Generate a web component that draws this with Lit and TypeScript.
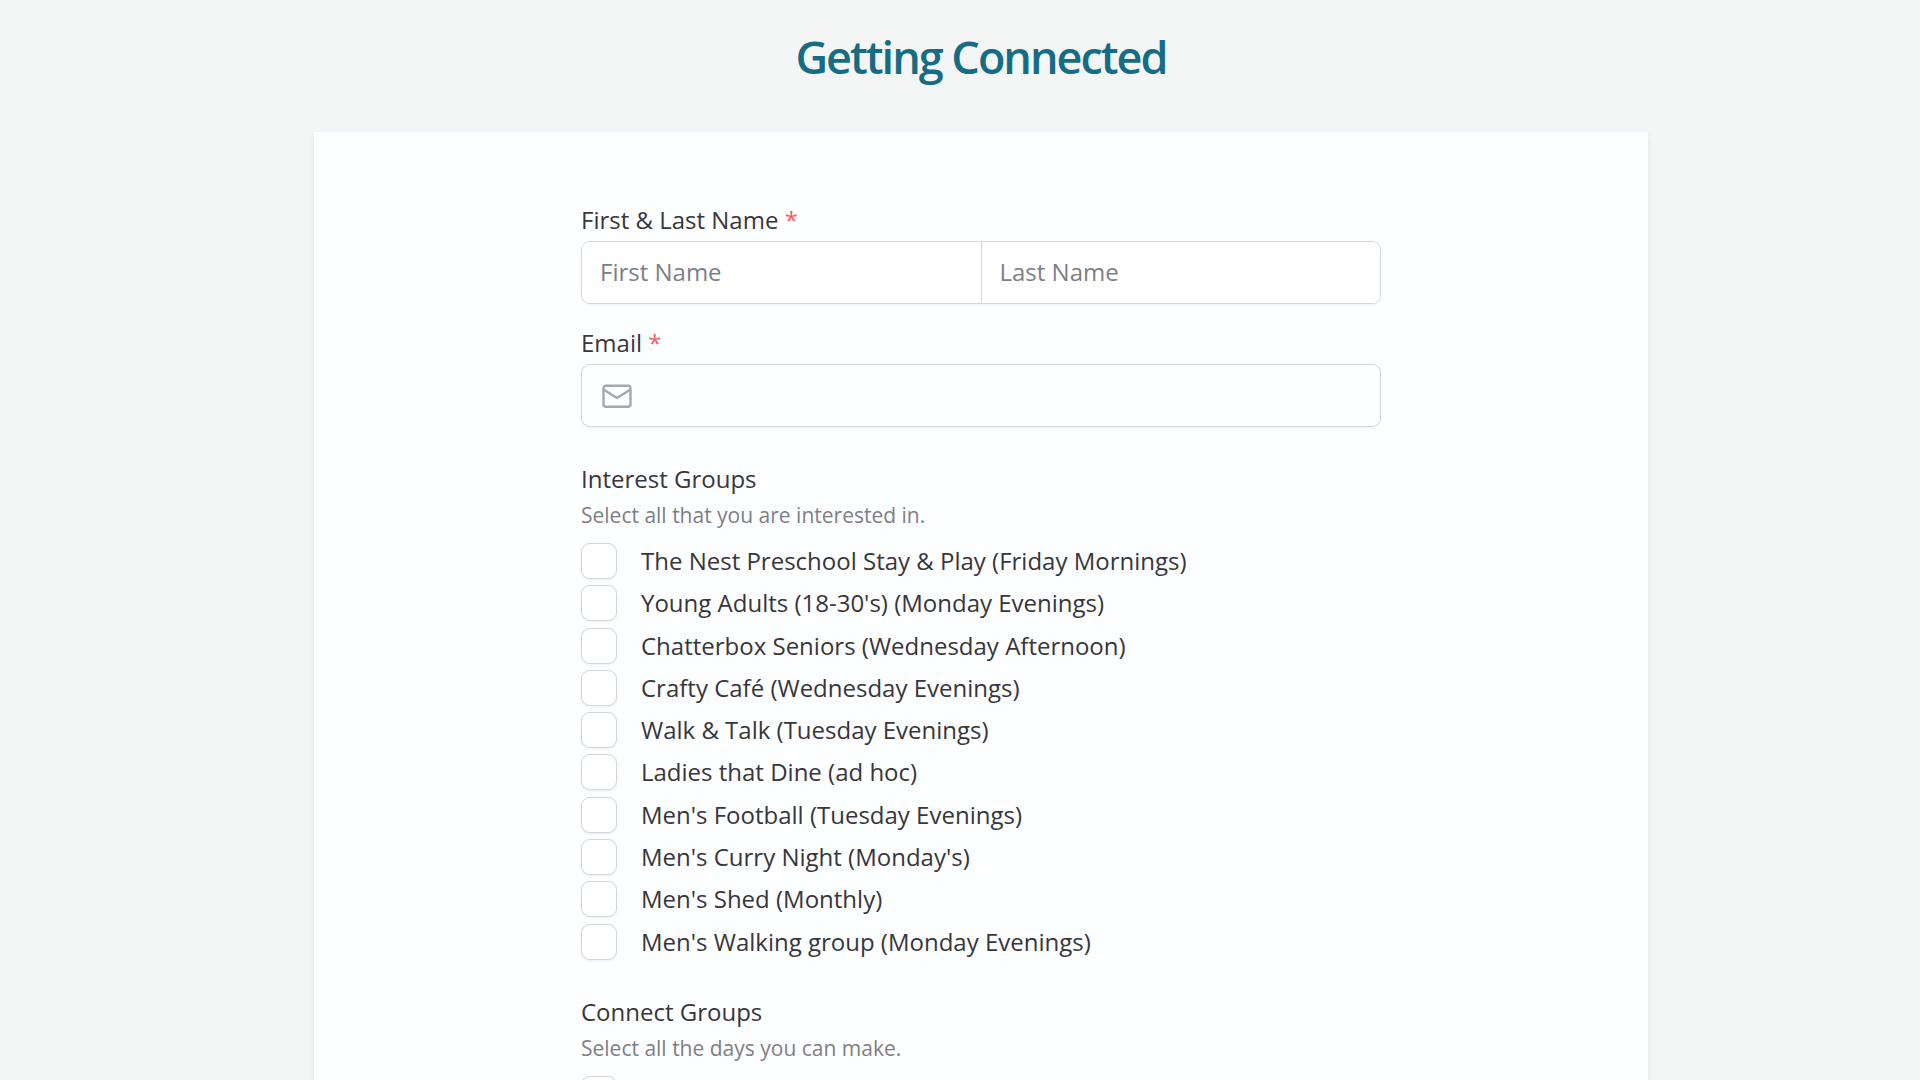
import { LitElement, html, css } from "lit";
import { customElement } from "lit/decorators.js";

const INTEREST_GROUPS = [
  "The Nest Preschool Stay & Play (Friday Mornings)",
  "Young Adults (18-30's) (Monday Evenings)",
  "Chatterbox Seniors (Wednesday Afternoon)",
  "Crafty Café (Wednesday Evenings)",
  "Walk & Talk (Tuesday Evenings)",
  "Ladies that Dine (ad hoc)",
  "Men's Football (Tuesday Evenings)",
  "Men's Curry Night (Monday's)",
  "Men's Shed (Monthly)",
  "Men's Walking group (Monday Evenings)",
];

@customElement("app-root")
export class AppRoot extends LitElement {
  static styles = css`
    :host {
      display: block;
      box-sizing: border-box;
      height: 100vh;
      overflow: hidden auto;
      scrollbar-width: none;
      padding-left: 42px;
      background: #f4f6f5;
      color: #37363b;
      font: 400 24px/32px "Open Sans", sans-serif;
    }
    .title {
      margin: 0;
      padding: 25px 24px 43px;
      text-align: center;
      color: #156c85;
      font-size: 45px;
      line-height: 64px;
      font-weight: 600;
      letter-spacing: -2px;
    }
    .card {
      box-sizing: border-box;
      max-width: 1334px;
      margin: 0 auto;
      padding: 72px 24px 96px;
      background: #fdfeff;
      box-shadow: 0 4px 8px rgba(0, 0, 0, 0.07);
    }
    .form {
      display: flex;
      flex-direction: column;
      gap: 33px;
      max-width: 800px;
      margin: 0 auto;
    }
    .contact {
      display: grid;
      gap: 23px;
      padding-bottom: 3px;
    }
    fieldset {
      min-width: 0;
      margin: 0;
      padding: 0;
      border: 0;
    }
    legend {
      padding: 0;
    }
    .caption {
      display: block;
      padding-bottom: 5px;
    }
    .required {
      color: #fb5b60;
    }
    .box {
      display: flex;
      align-items: center;
      box-sizing: border-box;
      height: 63px;
      border: 1px solid #d5d6d9;
      border-radius: 9px;
      box-shadow: 0 1px 3px rgba(30, 30, 60, 0.06);
      overflow: hidden;
    }
    .text {
      flex: 1;
      box-sizing: border-box;
      min-width: 0;
      height: 100%;
      margin: 0;
      padding: 0 18px 2px;
      border: 0;
      outline: 0;
      background: #fff;
      color: inherit;
      font: inherit;
    }
    .text::placeholder {
      color: #7e7e86;
      opacity: 1;
    }
    .text + .text {
      border-left: 1px solid #d5d6d9;
    }
    .email {
      background: transparent;
    }
    .mail {
      flex: none;
      width: 32px;
      height: 32px;
      margin-left: 19px;
    }
    .help {
      margin: 0;
      padding: 4px 0 9px;
      color: #7e7e86;
      font-size: 21px;
    }
    .list {
      display: grid;
      grid-auto-rows: 1fr;
      margin: 0;
      padding: 0;
      list-style: none;
    }
    .interests {
      min-height: 423px;
    }
    .option {
      display: flex;
      align-items: center;
      gap: 24px;
      min-height: 42px;
    }
    .tick {
      flex: none;
      appearance: none;
      box-sizing: border-box;
      width: 36px;
      height: 36px;
      margin: 0;
      border: 1px solid #d5d6d9;
      border-radius: 9px;
      background: #fff;
      box-shadow: 0 1px 3px rgba(30, 30, 60, 0.08);
    }
    .tick:checked {
      background: #156c85;
    }
  `;

  render() {
    return html`
      <h1 class="title">Getting Connected</h1>
      <main class="card">
        <form class="form">
          <div class="contact">
            <fieldset>
              <legend class="caption">First &amp; Last Name <span class="required">*</span></legend>
              <div class="box">
                <input class="text" type="text" name="first" placeholder="First Name" aria-label="First Name" required />
                <input class="text" type="text" name="last" placeholder="Last Name" aria-label="Last Name" required />
              </div>
            </fieldset>
            <div>
              <label class="caption" for="email">Email <span class="required">*</span></label>
              <div class="box">
                <svg class="mail" viewBox="0 0 32 32" fill="none" stroke="#a6a6ae" stroke-width="2.4" stroke-linejoin="round" aria-hidden="true">
                  <rect x="2.500" y="5.800" width="27" height="21" rx="2.600" />
                  <path d="M2.500 9.500 16 18 29.500 9.500" />
                </svg>
                <input class="text email" id="email" type="email" name="email" required />
              </div>
            </div>
          </div>
          <fieldset>
            <legend>Interest Groups</legend>
            <p class="help">Select all that you are interested in.</p>
            <ul class="list interests">
              ${INTEREST_GROUPS.map(
                (name) => html`
                  <li>
                    <label class="option"><input class="tick" type="checkbox" name="interest" .value=${name} />${name}</label>
                  </li>
                `
              )}
            </ul>
          </fieldset>
          <fieldset>
            <legend id="connect">Connect Groups</legend>
            <p class="help">Select all the days you can make.</p>
            <div class="option"><input class="tick" type="checkbox" name="day" aria-labelledby="connect" /></div>
          </fieldset>
        </form>
      </main>
    `;
  }
}
